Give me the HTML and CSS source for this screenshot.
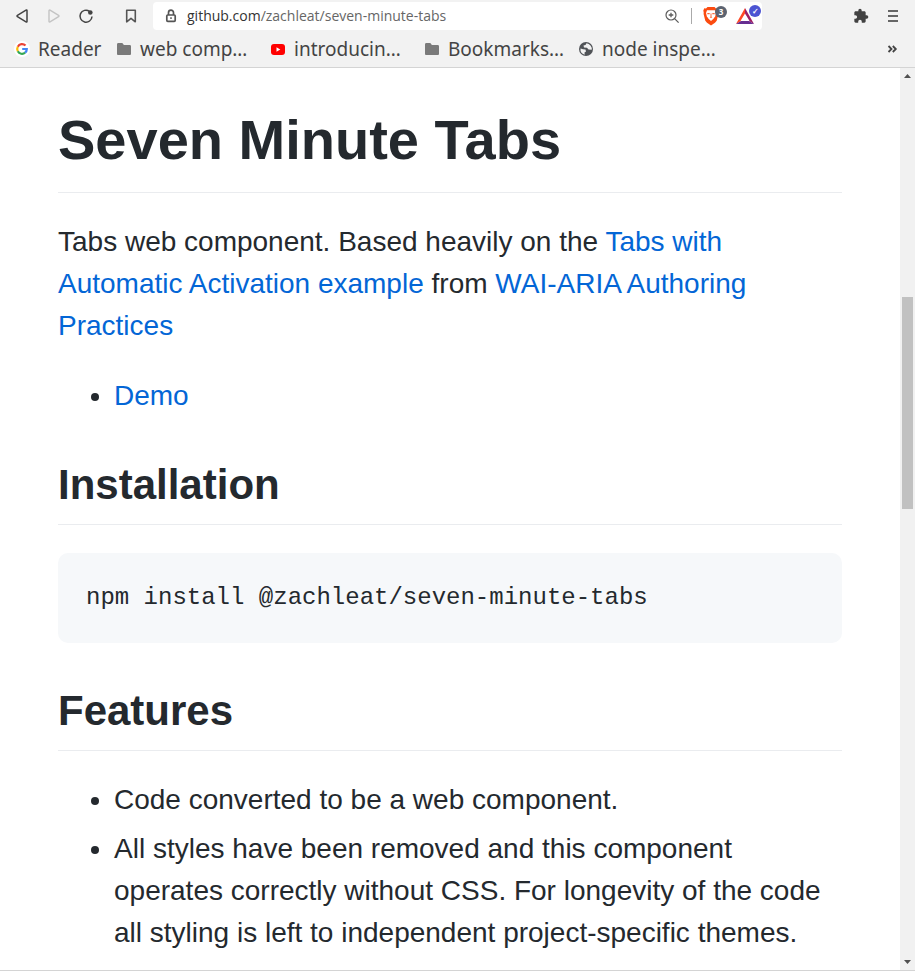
FILE: index.html
```html
<!DOCTYPE html>
<html lang="en">
<head>
    <meta charset="UTF-8">
    <meta name="viewport" content="width=device-width, initial-scale=1.0">
    <title>zachleat/seven-minute-tabs</title>
    <link rel="stylesheet" href="styles.css">
</head>
<body>

    <!-- Browser toolbar -->
    <header class="chrome">
        <div class="toolbar">
            <div class="nav-buttons">
                <button type="button" aria-label="Back">
                    <svg width="16" height="16" viewBox="0 0 16 16"><path d="M13 2.600v10.800c0 .6-.5.8-1 .5L3.400 8.600c-.5-.3-.5-.9 0-1.200L12 2.100c.5-.3 1-.1 1 .5z" fill="none" stroke="#444" stroke-width="1.500"/></svg>
                </button>
                <button type="button" aria-label="Forward" disabled>
                    <svg width="16" height="16" viewBox="0 0 16 16"><path d="M3 2.600v10.800c0 .6.5.8 1 .5l8.600-5.300c.5-.3.5-.9 0-1.200L4 2.100c-.5-.3-1-.1-1 .5z" fill="none" stroke="#c4c4c4" stroke-width="1.400"/></svg>
                </button>
                <button type="button" aria-label="Reload">
                    <svg width="16" height="16" viewBox="0 0 16 16"><path d="M11.500 3.300A6 6 0 1 0 14 8.500" fill="none" stroke="#444" stroke-width="1.500"/><circle cx="12.300" cy="4.500" r="2.300" fill="#444"/></svg>
                </button>
            </div>
            <button type="button" class="save" aria-label="Bookmark this page">
                <svg width="16" height="16" viewBox="0 0 16 16"><path d="M3.700 2.200h8.600v11.600L8 10.300l-4.300 3.500z" fill="none" stroke="#555" stroke-width="1.600" stroke-linejoin="round"/></svg>
            </button>
            <div class="address-bar">
                <svg width="16" height="16" viewBox="0 0 16 16"><path d="M5.500 7V4.700a2.500 2.500 0 0 1 5 0V7" fill="none" stroke="#555" stroke-width="1.700"/><rect x="3.800" y="7" width="8.400" height="6.300" rx="1" fill="none" stroke="#555" stroke-width="1.700"/><rect x="7.200" y="9.300" width="1.600" height="1.600" fill="#555"/></svg>
                <a class="url" href="#"><span>github.com</span>/zachleat/seven-minute-tabs</a>
                <button type="button" aria-label="Zoom">
                    <svg width="16" height="16" viewBox="0 0 16 16"><circle cx="7" cy="7" r="5" fill="none" stroke="#5c5c5c" stroke-width="1.200"/><path d="M10.600 10.600l4 4M7 4.700v4.600M4.700 7h4.600" fill="none" stroke="#5c5c5c" stroke-width="1.300"/></svg>
                </button>
                <span class="divider"></span>
                <button type="button" class="shield" aria-label="Brave Shields">
                    <svg width="18" height="20" viewBox="0 0 18 20"><path d="M5.500 1h7l1.500 1.500 1.700-.2 1 2.300-.4 2 .1 1.400-1.700 6.800-1.700 2L9 19.500l-4-2.700-1.700-2L1.600 8l.1-1.400-.4-2 1-2.300 1.700.2z" fill="#fb4b10"/><path d="M5 4.300h8l1 2.700-.8 3.300-1.700 2.500L9 15l-2.500-2.200-1.700-2.500L4 7z" fill="#fff"/><path d="M5.300 7h2.400v1.300H5.300zM10.300 7h2.400v1.300h-2.400zM8.500 7.500h1v3l.8 1.200H7.700l.8-1.200z" fill="#fb6a3c"/></svg>
                    <span class="badge badge-gray">3</span>
                </button>
                <button type="button" class="rewards" aria-label="Brave Rewards">
                    <svg width="18" height="18" viewBox="0 0 18 18"><path d="M9 1L0 17l5-3 4-6.500z" fill="#ff4724"/><path d="M9 1l9 16-5-3-4-6.500z" fill="#9e1f63"/><path d="M0 17h18l-5-3H5z" fill="#662d91"/><path d="M9 6.500L4.500 14h9z" fill="#fff"/></svg>
                    <span class="badge badge-blue">✓</span>
                </button>
            </div>
            <div class="menu-buttons">
                <button type="button" aria-label="Extensions">
                    <svg width="16" height="16" viewBox="0 0 24 24"><path d="M20.500 11H19V7c0-1.100-.9-2-2-2h-4V3.500a2.500 2.500 0 0 0-5 0V5H4c-1.100 0-2 .9-2 2v3.800h1.500a2.700 2.700 0 0 1 0 5.400H2V20c0 1.100.9 2 2 2h3.800v-1.500a2.700 2.700 0 0 1 5.400 0V22H17c1.100 0 2-.9 2-2v-4h1.500a2.500 2.500 0 0 0 0-5z" fill="#424242"/></svg>
                </button>
                <button type="button" aria-label="Menu">
                    <svg width="16" height="16" viewBox="0 0 16 16"><path d="M3 3h10M3 8h10M3 13h10" stroke="#666" stroke-width="2"/></svg>
                </button>
            </div>
        </div>

        <!-- Bookmarks -->
        <nav class="bookmarks">
            <a href="#" class="bookmark bookmark-short">
                <svg width="16" height="16" viewBox="0 0 16 16"><circle cx="8" cy="8" r="8" fill="#fff"/><g fill="none" stroke-width="2.200"><path d="M11.500 4.600A4.800 4.800 0 0 0 3.800 5.700" stroke="#ea4335"/><path d="M3.800 5.700a4.800 4.800 0 0 0 0 4.600" stroke="#fbbc05"/><path d="M3.800 10.300a4.800 4.800 0 0 0 7.300 1.400" stroke="#34a853"/><path d="M11.100 11.700A4.800 4.800 0 0 0 12.800 8H8.200" stroke="#4285f4"/></g></svg>
                <span>Reader</span>
            </a>
            <a href="#" class="bookmark">
                <svg width="16" height="16" viewBox="0 0 16 16"><path d="M1 3.500C1 2.700 1.500 2 2.300 2h4l1.600 2h5.800c.8 0 1.300.6 1.300 1.300v7.400c0 .8-.5 1.300-1.300 1.300H2.300C1.500 14 1 13.500 1 12.700z" fill="#7a7a7a"/></svg>
                <span>web comp…</span>
            </a>
            <a href="#" class="bookmark">
                <svg width="16" height="16" viewBox="0 0 16 16"><rect x="1" y="3" width="14" height="11" rx="3" fill="#f00"/><path d="M6.500 6.200v4.600L10.300 8.500z" fill="#fff"/></svg>
                <span>introducin…</span>
            </a>
            <a href="#" class="bookmark">
                <svg width="16" height="16" viewBox="0 0 16 16"><path d="M1 3.500C1 2.700 1.500 2 2.300 2h4l1.600 2h5.800c.8 0 1.300.6 1.300 1.300v7.400c0 .8-.5 1.300-1.300 1.300H2.300C1.500 14 1 13.500 1 12.700z" fill="#7a7a7a"/></svg>
                <span>Bookmarks…</span>
            </a>
            <a href="#" class="bookmark">
                <svg width="16" height="16" viewBox="0 0 16 16"><circle cx="8" cy="8" r="7" fill="#505357"/><path d="M2.500 7.500L5 8.200l2.500.3.500 2-1.500 1 .2 2.200A5.700 5.700 0 0 1 2.500 7.500zM8.500 2.300l-1 1.700-2 .5.500 2 3 .2 1.500 1.800 3.200.3A5.700 5.700 0 0 0 8.500 2.300z" fill="#f2f2f2"/></svg>
                <span>node inspe…</span>
            </a>
            <button type="button" class="more" aria-label="More bookmarks">
                <svg width="16" height="16" viewBox="0 0 16 16"><path d="M3.500 5l3 3-3 3M7.800 5l3 3-3 3" fill="none" stroke="#444" stroke-width="1.800"/></svg>
            </button>
        </nav>
    </header>

    <!-- Page -->
    <div class="viewport">
        <main class="readme">
            <h1>Seven Minute Tabs</h1>
            <p>Tabs web component. Based heavily on the <a href="#">Tabs with Automatic Activation example</a> from <a href="#">WAI-ARIA Authoring Practices</a></p>
            <ul>
                <li><a href="#">Demo</a></li>
            </ul>
            <h2>Installation</h2>
            <pre><code>npm install @zachleat/seven-minute-tabs</code></pre>
            <h2>Features</h2>
            <ul>
                <li>Code converted to be a web component.</li>
                <li>All styles have been removed and this component operates correctly without CSS. For longevity of the code all styling is left to independent project-specific themes.</li>
            </ul>
        </main>
        <div class="scrollbar">
            <svg width="15" height="17" viewBox="0 0 15 17"><path d="M4 10h7L7.500 6z" fill="#505050"/></svg>
            <div class="track"><div class="thumb"></div></div>
            <svg width="15" height="17" viewBox="0 0 15 17"><path d="M4 7h7l-3.500 4z" fill="#505050"/></svg>
        </div>
    </div>

</body>
</html>
```

FILE: styles.css
```css
/* General Styles */
* {
    margin: 0;
    padding: 0;
    box-sizing: border-box;
}
body {
    display: flex;
    flex-direction: column;
    height: 100vh;
    overflow: hidden;
    background: #fff;
    color: #24292e;
    font-family: "Liberation Sans", Arial, sans-serif;
    font-size: 28px;
    line-height: 42px;
}
a {
    color: #0366d6;
    text-decoration: none;
}
button {
    display: flex;
    align-items: center;
    border: none;
    background: none;
}
svg {
    display: block;
    flex: none;
}

/* Browser toolbar */
.chrome {
    flex: none;
    background: #f2f2f2;
    border-bottom: 1px solid #d4d4d4;
    font-family: "Noto Sans", sans-serif;
}
.toolbar {
    display: flex;
    align-items: center;
    height: 32px;
    padding: 0 14px;
}
.nav-buttons {
    display: flex;
    gap: 16px;
}
.save {
    margin: 0 14px 0 29px;
}
.address-bar {
    display: flex;
    flex: 1;
    align-items: center;
    max-width: 609px;
    height: 28px;
    padding: 0 8px 0 10px;
    background: #fff;
    border-radius: 4px;
}
.url {
    flex: 1;
    margin-left: 8px;
    color: #666;
    font-family: "Open Sans", sans-serif;
    font-size: 14px;
    line-height: 20px;
}
.url span {
    color: #333;
}
.divider {
    width: 1px;
    height: 16px;
    margin: 0 10px 0 11px;
    background: #aaa;
}
.shield,
.rewards {
    position: relative;
}
.rewards {
    margin-left: 16px;
}
.badge {
    position: absolute;
    top: 0;
    right: -7px;
    width: 12px;
    height: 12px;
    border-radius: 6px;
    color: #fff;
    font-family: "Noto Sans", sans-serif;
    font-size: 8px;
    font-weight: bold;
    line-height: 12px;
    text-align: center;
}
.badge-gray {
    background: #5c6370;
}
.badge-blue {
    top: -2px;
    background: #4c54d2;
}
.menu-buttons {
    display: flex;
    gap: 16px;
    margin-left: auto;
}

/* Bookmarks */
.bookmarks {
    display: flex;
    align-items: center;
    height: 35px;
    padding: 0 14px 2px;
}
.bookmark {
    display: flex;
    flex: none;
    align-items: center;
    gap: 8px;
    width: 154px;
    color: #444;
    font-size: 19px;
    line-height: 28px;
    white-space: nowrap;
}
.bookmark-short {
    width: 102px;
}
.more {
    margin-left: auto;
}

/* Page */
.viewport {
    display: flex;
    flex: 1;
    min-height: 0;
    border-bottom: 1px solid #d4d4d4;
}
.readme {
    flex: 1;
    min-width: 0;
    padding: 37px 58px 0;
    overflow: hidden;
}
.readme h1,
.readme h2 {
    border-bottom: 1px solid #eaecef;
    margin-bottom: 28px;
}
.readme h1 {
    padding-bottom: 17px;
    font-size: 56px;
    line-height: 70px;
}
.readme h2 {
    margin-top: 42px;
    padding-bottom: 13px;
    font-size: 42px;
    line-height: 52px;
}
.readme p {
    margin-bottom: 28px;
}
.readme ul {
    padding-left: 56px;
}
.readme li + li {
    margin-top: 7px;
}
.readme pre {
    padding: 28px;
    overflow: hidden;
    background: #f6f8fa;
    border-radius: 10px;
    font-family: "Liberation Mono", monospace;
    font-size: 24px;
    line-height: 34px;
}
.readme code {
    font: inherit;
}

/* Scrollbar */
.scrollbar {
    display: flex;
    flex-direction: column;
    flex: none;
    width: 15px;
    background: #f1f1f1;
}
.track {
    flex: 1;
    padding: 212px 2px 0;
}
.thumb {
    height: 212px;
    background: #c1c1c1;
}
```
